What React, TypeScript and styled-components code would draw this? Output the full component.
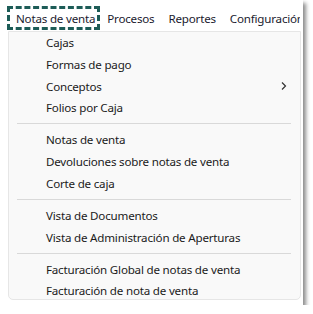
import React from "react";
import styled, { createGlobalStyle } from "styled-components";

const Global = createGlobalStyle`
  html, body { margin: 0; padding: 0; background: #ffffff; }
  body { font-family: "Noto Sans", "Open Sans", sans-serif; }
`;

const Frame = styled.div`
  width: 303px;
  height: 305px;
  background: #ffffff;
  box-shadow: 3px 3px 4px rgba(0, 0, 0, 0.45);
  display: flex;
  flex-direction: column;
  overflow: hidden;
`;

const MenuBar = styled.div`
  display: flex;
  align-items: center;
  height: 26px;
  margin-top: 5px;
  padding-left: 7px;
  width: 293px;
  overflow: hidden;
  white-space: nowrap;
`;

const TopItem = styled.div<{ $active?: boolean }>`
  font-size: 11.6px;
  letter-spacing: -0.2px;
  color: #1a1a2e;
  height: 24px;
  display: flex;
  align-items: center;
  outline: ${(p) => (p.$active ? "3px dashed #1d5c57" : "none")};
  outline-offset: -3px;
  padding-left: ${(p) => (p.$active ? "9px" : "7px")};
  padding-right: ${(p) => (p.$active ? "5px" : "7px")};
`;

const Dropdown = styled.div`
  margin-left: 8px;
  width: 293px;
  height: 269px;
  background: #f9f9f9;
  border: 1px solid #e6e6e6;
  border-radius: 0 0 5px 5px;
  box-sizing: border-box;
  display: flex;
  flex-direction: column;
`;

const Item = styled.div`
  height: 21.7px;
  flex-shrink: 0;
  display: flex;
  align-items: center;
  justify-content: space-between;
  padding-left: 37px;
  padding-right: 12px;
  font-size: 11.6px;
  letter-spacing: -0.2px;
  color: #1b1b1b;
  white-space: nowrap;
`;

const Separator = styled.div`
  height: 1px;
  flex-shrink: 0;
  background: #d9d9d9;
  margin: 4.7px 9px 4.7px 8px;
`;

const Chevron = () => (
  <svg width="8" height="10" viewBox="0 0 8 10">
    <path d="M2 1.5 L5.5 5 L2 8.5" fill="none" stroke="#333" strokeWidth="1.2" />
  </svg>
);

const groups: { label: string; sub?: boolean }[][] = [
  [{ label: "Cajas" }, { label: "Formas de pago" }, { label: "Conceptos", sub: true }, { label: "Folios por Caja" }],
  [{ label: "Notas de venta" }, { label: "Devoluciones sobre notas de venta" }, { label: "Corte de caja" }],
  [{ label: "Vista de Documentos" }, { label: "Vista de Administración de Aperturas" }],
  [{ label: "Facturación Global de notas de venta" }, { label: "Facturación de nota de venta" }],
];

export default function App() {
  return (
    <>
      <Global />
      <Frame>
        <MenuBar>
          <TopItem $active>Notas de venta</TopItem>
          <TopItem>Procesos</TopItem>
          <TopItem>Reportes</TopItem>
          <TopItem>Configuración</TopItem>
        </MenuBar>
        <Dropdown>
          {groups.map((g, gi) => (
            <React.Fragment key={gi}>
              {gi > 0 && <Separator />}
              {g.map((it) => (
                <Item key={it.label}>
                  <span>{it.label}</span>
                  {it.sub && <Chevron />}
                </Item>
              ))}
            </React.Fragment>
          ))}
        </Dropdown>
      </Frame>
    </>
  );
}
